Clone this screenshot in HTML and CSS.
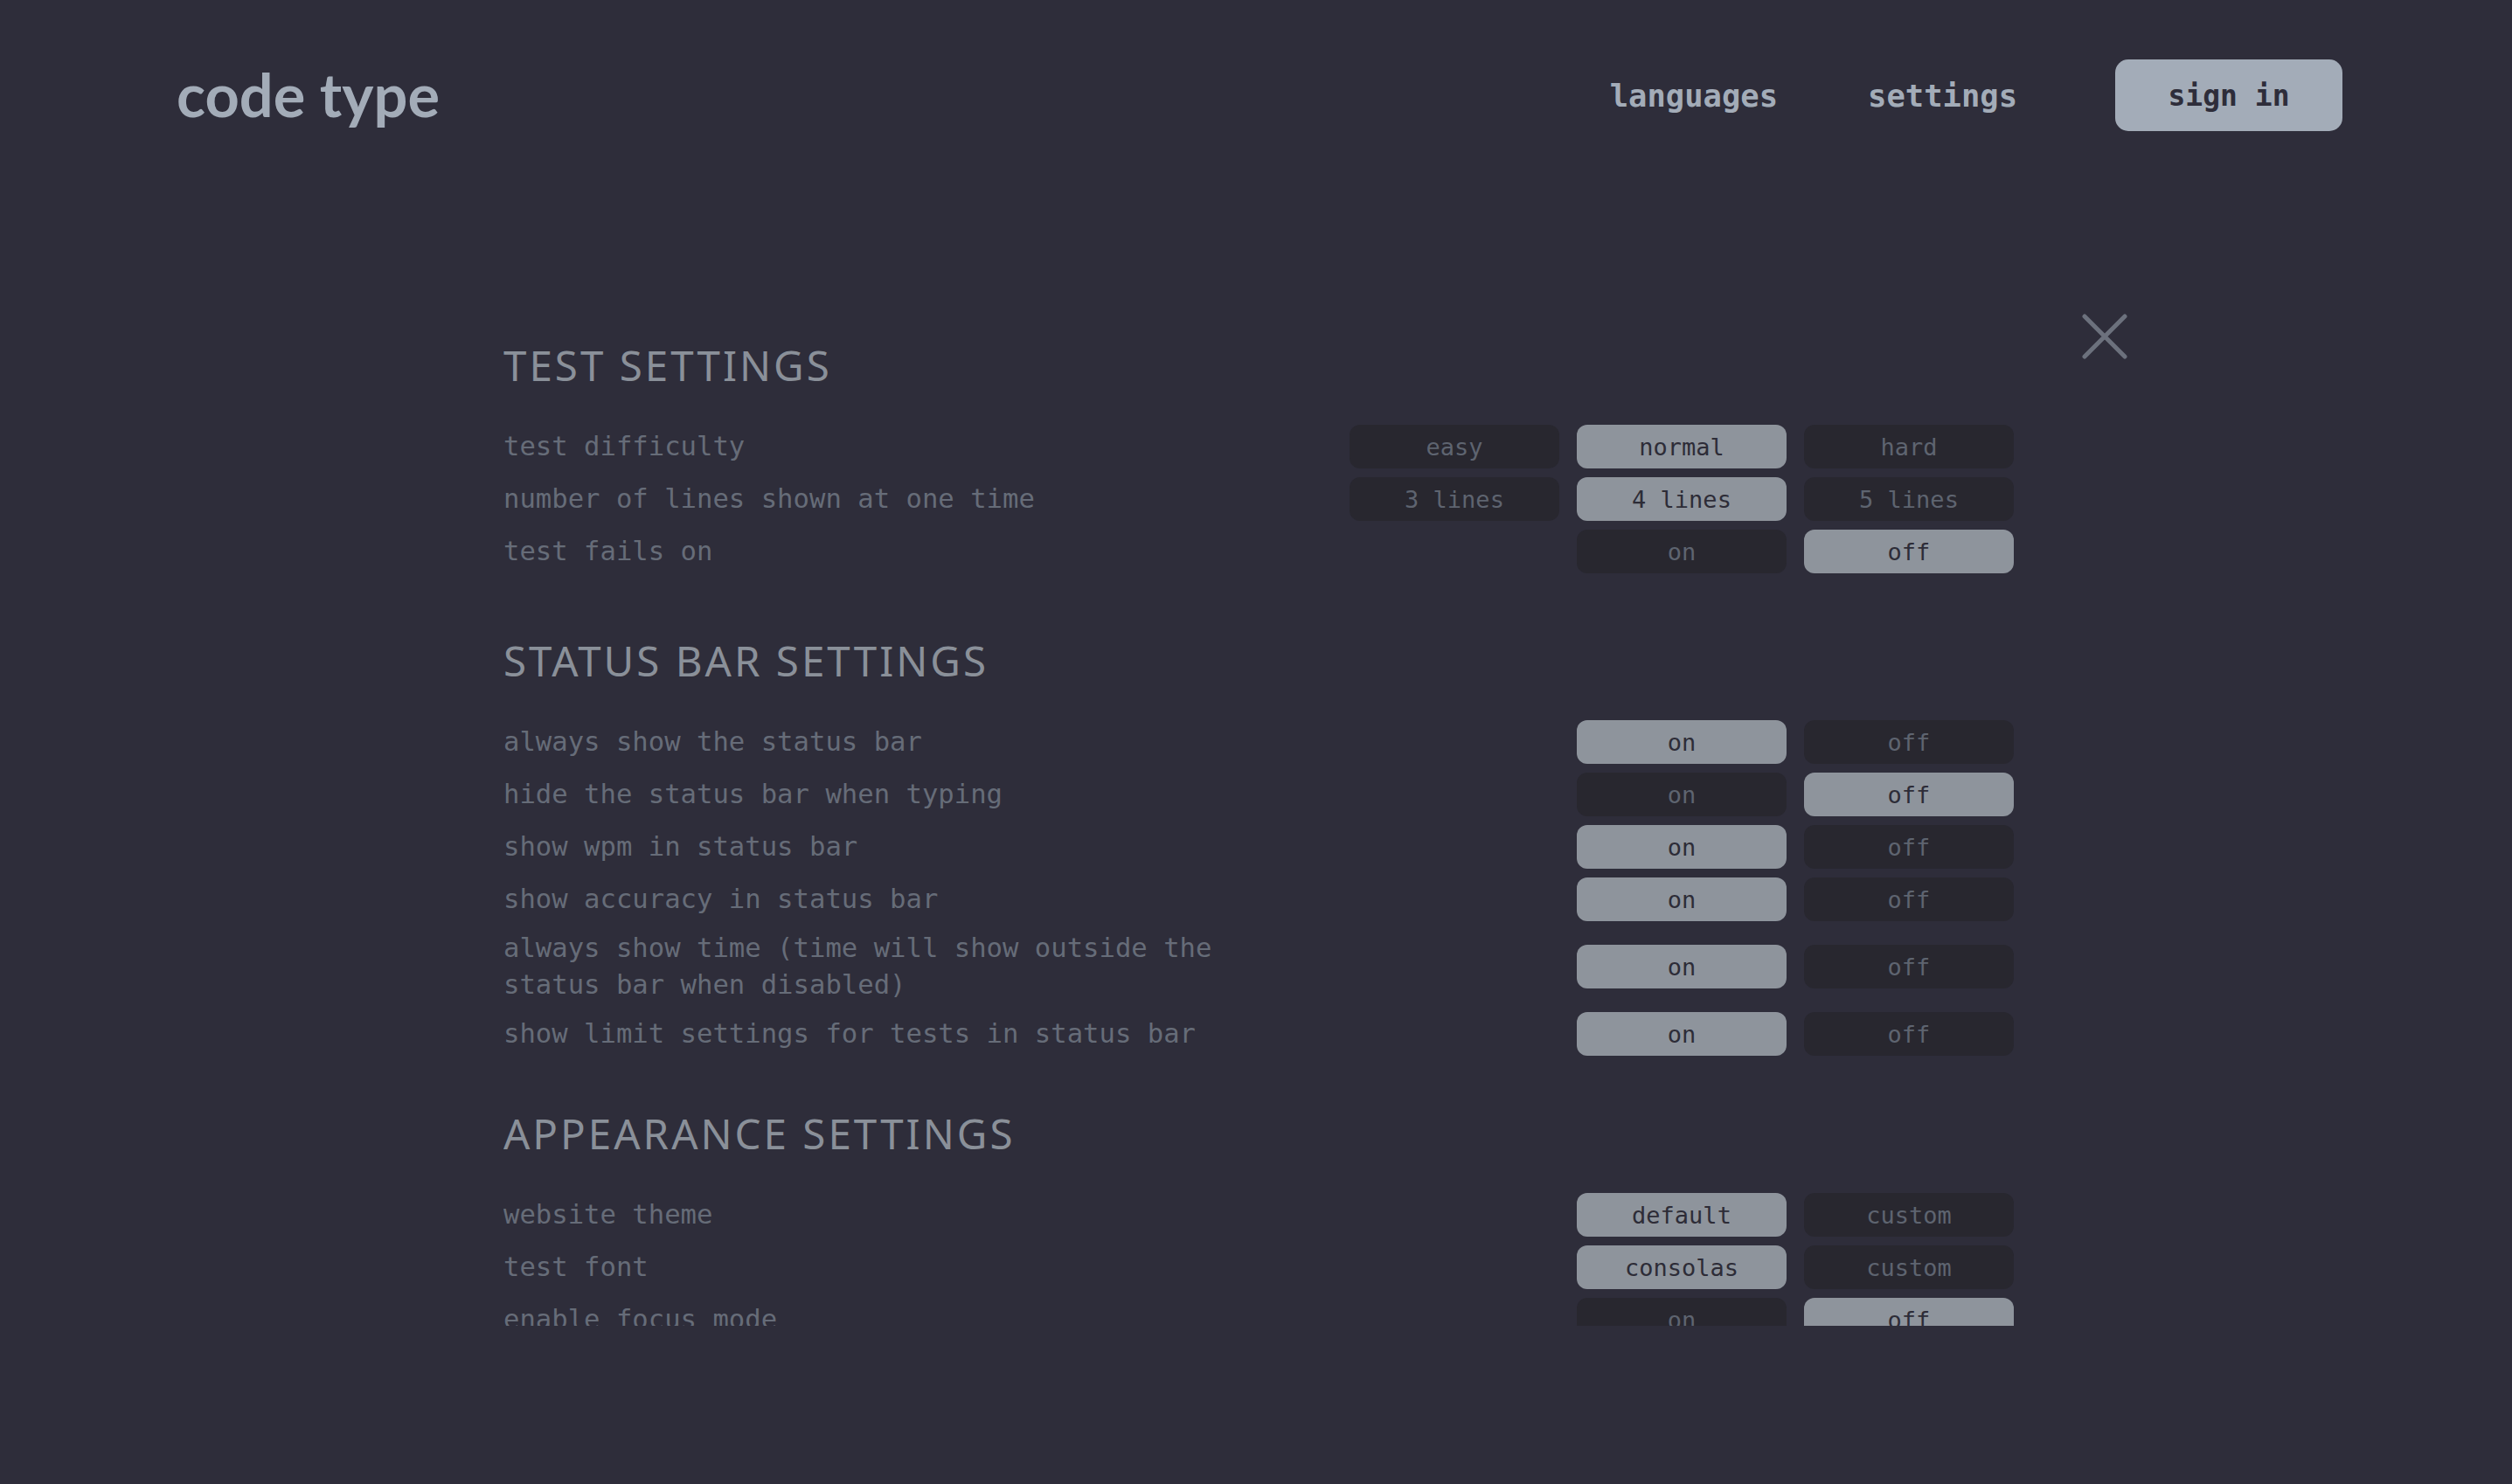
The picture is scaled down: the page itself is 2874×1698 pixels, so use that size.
FILE: index.html
```html
<!DOCTYPE html>
<html lang="en">
<head>
<meta charset="utf-8">
<title>code type — settings</title>
<link rel="stylesheet" href="styles.css">
</head>
<body>
<header class="topbar">
  <div class="logo">code type</div>
  <nav class="nav">
    <a class="nav-link" href="#">languages</a>
    <a class="nav-link" href="#">settings</a>
    <button class="signin">sign in</button>
  </nav>
</header>

<div class="modal">
  <button class="close" aria-label="close">
    <svg width="52" height="52" viewBox="0 0 52 52"><path d="M3 3 L49 49 M49 3 L3 49" stroke="#6c717d" stroke-width="5" stroke-linecap="round" fill="none"/></svg>
  </button>
  <div class="modal-body">
    <section class="section section-first">
      <h2 class="section-title">TEST SETTINGS</h2>
      <div class="row"><span class="label">test difficulty</span>
        <div class="opts"><span class="opt">easy</span><span class="opt on">normal</span><span class="opt">hard</span></div></div>
      <div class="row"><span class="label">number of lines shown at one time</span>
        <div class="opts"><span class="opt">3 lines</span><span class="opt on">4 lines</span><span class="opt">5 lines</span></div></div>
      <div class="row"><span class="label">test fails on</span>
        <div class="opts"><span class="opt">on</span><span class="opt on">off</span></div></div>
    </section>

    <section class="section">
      <h2 class="section-title">STATUS BAR SETTINGS</h2>
      <div class="row"><span class="label">always show the status bar</span>
        <div class="opts"><span class="opt on">on</span><span class="opt">off</span></div></div>
      <div class="row"><span class="label">hide the status bar when typing</span>
        <div class="opts"><span class="opt">on</span><span class="opt on">off</span></div></div>
      <div class="row"><span class="label">show wpm in status bar</span>
        <div class="opts"><span class="opt on">on</span><span class="opt">off</span></div></div>
      <div class="row"><span class="label">show accuracy in status bar</span>
        <div class="opts"><span class="opt on">on</span><span class="opt">off</span></div></div>
      <div class="row"><span class="label">always show time (time will show outside the status bar when disabled)</span>
        <div class="opts"><span class="opt on">on</span><span class="opt">off</span></div></div>
      <div class="row"><span class="label">show limit settings for tests in status bar</span>
        <div class="opts"><span class="opt on">on</span><span class="opt">off</span></div></div>
    </section>

    <section class="section">
      <h2 class="section-title">APPEARANCE SETTINGS</h2>
      <div class="row"><span class="label">website theme</span>
        <div class="opts"><span class="opt on">default</span><span class="opt">custom</span></div></div>
      <div class="row"><span class="label">test font</span>
        <div class="opts"><span class="opt on">consolas</span><span class="opt">custom</span></div></div>
      <div class="row"><span class="label">enable focus mode</span>
        <div class="opts"><span class="opt">on</span><span class="opt on">off</span></div></div>
    </section>
  </div>
</div>
</body>
</html>
```

FILE: styles.css
```css
html, body {
  margin: 0;
  padding: 0;
  background: #2e2d3a;
}
body {
  width: 2874px;
  height: 1698px;
  overflow: hidden;
  font-family: "DejaVu Sans Mono", "Liberation Mono", monospace;
}

.topbar {
  display: flex;
  align-items: center;
  justify-content: space-between;
  height: 82px;
  padding: 68px 194px 0 202px;
}
.logo {
  font-family: Lato, "Open Sans", sans-serif;
  font-weight: 700;
  font-size: 68.5px;
  color: #a3acb8;
  line-height: 1;
  margin-top: -2px;
}
.nav {
  display: flex;
  align-items: center;
}
.nav-link {
  font-family: "DejaVu Sans Mono", monospace;
  font-weight: 700;
  font-size: 35.5px;
  color: #a3acb8;
  text-decoration: none;
  margin-right: 103px;
}
.nav-link:nth-child(2) {
  margin-right: 112px;
}
.signin {
  width: 260px;
  height: 82px;
  border: 0;
  border-radius: 15px;
  background: #a3acb8;
  color: #2e2d3a;
  font-family: "DejaVu Sans Mono", monospace;
  font-weight: 700;
  font-size: 33px;
  padding: 0;
}

.modal {
  position: relative;
  width: 1728px;
  padding-left: 6px;
  margin: 180px auto 0;
}
.close {
  position: absolute;
  right: -130px;
  top: 29px;
  background: none;
  border: 0;
  padding: 0;
  width: 52px;
  height: 52px;
}
.close svg { display: block; }

.modal-body {
  height: 1127px;
  padding-top: 60px;
  overflow: hidden;
}

.section {
  margin-bottom: 61px;
}
.section-first {
  margin-bottom: 72px;
}
.section-title {
  font-family: "Noto Sans", "Open Sans", sans-serif;
  font-weight: 400;
  font-size: 47.5px;
  line-height: 56px;
  letter-spacing: 3px;
  color: #8a9099;
  margin: 0 0 40px;
}

.row {
  display: flex;
  align-items: center;
  justify-content: space-between;
  min-height: 50px;
  margin-bottom: 10px;
}
.label {
  max-width: 850px;
  font-family: "DejaVu Sans Mono", monospace;
  font-size: 30.6px;
  line-height: 42px;
  color: #666c78;
}
.opts {
  display: flex;
  justify-content: flex-end;
  gap: 20px;
}
.opt {
  display: flex;
  align-items: center;
  justify-content: center;
  width: 240px;
  height: 50px;
  border-radius: 12px;
  background: #28272f;
  color: #5e6470;
  font-size: 27px;
}
.opt.on {
  background: #8e949c;
  color: #2d2c37;
}
```
